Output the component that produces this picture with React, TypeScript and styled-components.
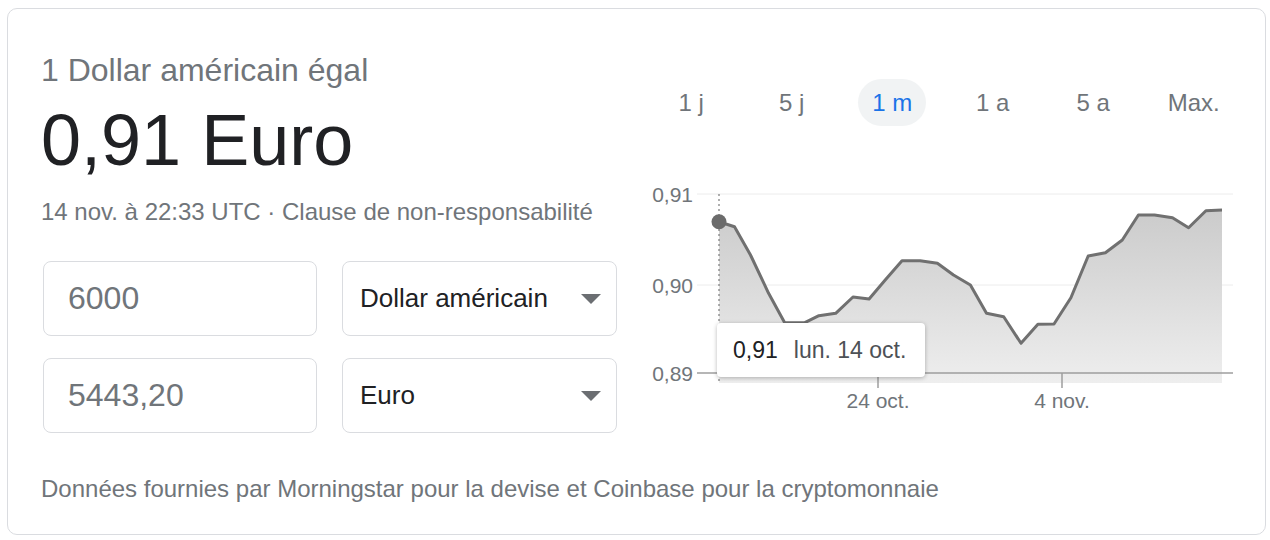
import styled, { createGlobalStyle } from "styled-components";

const GlobalStyle = createGlobalStyle`
  html, body {
    margin: 0;
    padding: 0;
    background: #ffffff;
  }
  body {
    font-family: "Liberation Sans", Arial, sans-serif;
    color: #202124;
  }
`;

const RANGES = ["1 j", "5 j", "1 m", "1 a", "5 a", "Max."];

// points du graphe (coordonnées locales du svg)
const POINTS: [number, number][] = [
  [78, 46.7],
  [93.5, 51.7],
  [109.5, 80],
  [127.6, 118.3],
  [143.7, 147.7],
  [163.8, 147.7],
  [177.9, 140.7],
  [194.7, 138.3],
  [212, 122],
  [228.1, 124],
  [244.2, 105],
  [261, 85.7],
  [279.1, 85.7],
  [296.4, 88.3],
  [312.5, 100],
  [329.4, 110],
  [345.5, 138.3],
  [362.7, 141.7],
  [380, 168.3],
  [396.9, 149.3],
  [413, 149],
  [429.9, 122.7],
  [447.2, 81],
  [464.4, 77.7],
  [481.3, 65],
  [497.4, 40],
  [513.5, 40],
  [531.5, 42.7],
  [547.6, 52.7],
  [564.9, 35.7],
  [581, 35],
];

const AREA_BOTTOM = 208;

function Chart() {
  const line = POINTS.map(([x, y]) => `${x},${y}`).join(" ");
  const first = POINTS[0];
  const last = POINTS[POINTS.length - 1];
  const area = `${first[0]},${AREA_BOTTOM} ${line} ${last[0]},${AREA_BOTTOM}`;

  return (
    <ChartWrap>
      <svg width="603" height="240" viewBox="0 0 603 240">
        <defs>
          <linearGradient id="areaFill" x1="0" y1="0" x2="0" y2="1">
            <stop offset="0%" stopColor="#cbcbcb" />
            <stop offset="100%" stopColor="#eeeeee" />
          </linearGradient>
        </defs>

        {/* grille */}
        <line x1="56" y1="19" x2="592" y2="19" stroke="#ececec" strokeWidth="1" />
        <line x1="56" y1="110" x2="592" y2="110" stroke="#ececec" strokeWidth="1" />

        <polygon points={area} fill="url(#areaFill)" />

        <line x1="56" y1="198" x2="592" y2="198" stroke="#9e9e9e" strokeWidth="1.5" />
        <line x1="237" y1="198" x2="237" y2="213" stroke="#9e9e9e" strokeWidth="1.5" />
        <line x1="421" y1="198" x2="421" y2="213" stroke="#9e9e9e" strokeWidth="1.5" />

        <line
          x1="78"
          y1="19"
          x2="78"
          y2={AREA_BOTTOM}
          stroke="#7a7a7a"
          strokeWidth="1.2"
          strokeDasharray="2 3"
        />

        <polyline
          points={line}
          fill="none"
          stroke="#707070"
          strokeWidth="3"
          strokeLinejoin="round"
        />
        <circle cx={first[0]} cy={first[1]} r="7.5" fill="#6b6b6b" />

        <AxisText x="52" y="27" textAnchor="end">0,91</AxisText>
        <AxisText x="52" y="117.5" textAnchor="end">0,90</AxisText>
        <AxisText x="52" y="205.5" textAnchor="end">0,89</AxisText>
        <AxisText x="237" y="233" textAnchor="middle">24 oct.</AxisText>
        <AxisText x="421" y="233" textAnchor="middle">4 nov.</AxisText>
      </svg>

      <Tooltip>
        <TipValue>0,91</TipValue>
        <TipDate>lun. 14 oct.</TipDate>
      </Tooltip>
    </ChartWrap>
  );
}

export default function App() {
  return (
    <>
      <GlobalStyle />
      <Page>
        <Card>
          <TopRow>
            <LeftCol>
              <Subtitle>1 Dollar américain égal</Subtitle>
              <BigValue>0,91 Euro</BigValue>
              <DateLine>14 nov. à 22:33 UTC · Clause de non-responsabilité</DateLine>

              <Converter>
                <Field>6000</Field>
                <Select>
                  <span>Dollar américain</span>
                  <Caret />
                </Select>
                <Field>5443,20</Field>
                <Select>
                  <span>Euro</span>
                  <Caret />
                </Select>
              </Converter>
            </LeftCol>

            <RightCol>
              <Tabs>
                {RANGES.map((r) => (
                  <Tab key={r}>
                    <TabLabel $active={r === "1 m"}>{r}</TabLabel>
                  </Tab>
                ))}
              </Tabs>
              <Chart />
            </RightCol>
          </TopRow>

          <Footer>
            Données fournies par Morningstar pour la devise et Coinbase pour la cryptomonnaie
          </Footer>
        </Card>
      </Page>
    </>
  );
}

/* ======= Styled Components ======= */

const Page = styled.div`
  padding: 8px 5px 0 7px;
`;

const Card = styled.div`
  box-sizing: border-box;
  width: 1259px;
  height: 527px;
  border: 1px solid #dadce0;
  border-radius: 10px;
  padding: 41px 20px 0 33px;
  display: flex;
  flex-direction: column;
`;

const TopRow = styled.div`
  display: flex;
  gap: 24px;
`;

const LeftCol = styled.div`
  width: 576px;
  display: flex;
  flex-direction: column;
`;

const Subtitle = styled.div`
  font-size: 32px;
  line-height: 40px;
  color: #70757a;
`;

const BigValue = styled.div`
  margin-top: 10px;
  font-size: 72px;
  line-height: 80px;
  color: #202124;
`;

const DateLine = styled.div`
  margin-top: 16px;
  font-size: 24px;
  line-height: 32px;
  color: #70757a;
  white-space: nowrap;
`;

const Converter = styled.div`
  margin: 33px 0 0 2px;
  display: grid;
  grid-template-columns: 274px 275px;
  grid-auto-rows: 75px;
  column-gap: 25px;
  row-gap: 22px;
`;

const Box = styled.div`
  box-sizing: border-box;
  border: 1px solid #dadce0;
  border-radius: 8px;
  display: flex;
  align-items: center;
`;

const Field = styled(Box)`
  padding-left: 24px;
  font-size: 32px;
  color: #70757a;
`;

const Select = styled(Box)`
  justify-content: space-between;
  padding: 0 15px 0 17px;
  font-size: 26px;
  color: #202124;
`;

const Caret = styled.span`
  width: 0;
  height: 0;
  border-left: 10px solid transparent;
  border-right: 10px solid transparent;
  border-top: 10px solid #6b6e72;
`;

const RightCol = styled.div`
  width: 603px;
  display: flex;
  flex-direction: column;
`;

const Tabs = styled.div`
  margin-top: 29px;
  display: flex;
  height: 47px;
`;

const Tab = styled.div`
  flex: 1;
  display: flex;
  justify-content: center;
  align-items: center;
`;

const TabLabel = styled.span<{ $active?: boolean }>`
  height: 47px;
  line-height: 47px;
  padding: 0 14px;
  border-radius: 24px;
  font-size: 24px;
  color: ${({ $active }) => ($active ? "#1a73e8" : "#70757a")};
  background: ${({ $active }) => ($active ? "#f1f3f4" : "transparent")};
`;

const ChartWrap = styled.div`
  position: relative;
  margin-top: 49px;
  width: 603px;
  height: 240px;

  svg {
    display: block;
  }
`;

const AxisText = styled.text`
  font-family: "Liberation Sans", Arial, sans-serif;
  font-size: 21px;
  fill: #70757a;
`;

const Tooltip = styled.div`
  position: absolute;
  left: 76px;
  top: 148px;
  box-sizing: border-box;
  width: 208px;
  height: 54px;
  padding-left: 16px;
  display: flex;
  gap: 16px;
  align-items: center;
  background: #ffffff;
  border-radius: 4px;
  box-shadow: 0 1px 4px rgba(0, 0, 0, 0.28);
  font-size: 23px;
  line-height: 54px;
  white-space: nowrap;
`;

const TipValue = styled.span`
  color: #202124;
`;

const TipDate = styled.span`
  color: #4d5156;
`;

const Footer = styled.div`
  margin-top: 40px;
  font-size: 24px;
  line-height: 32px;
  color: #70757a;
`;
